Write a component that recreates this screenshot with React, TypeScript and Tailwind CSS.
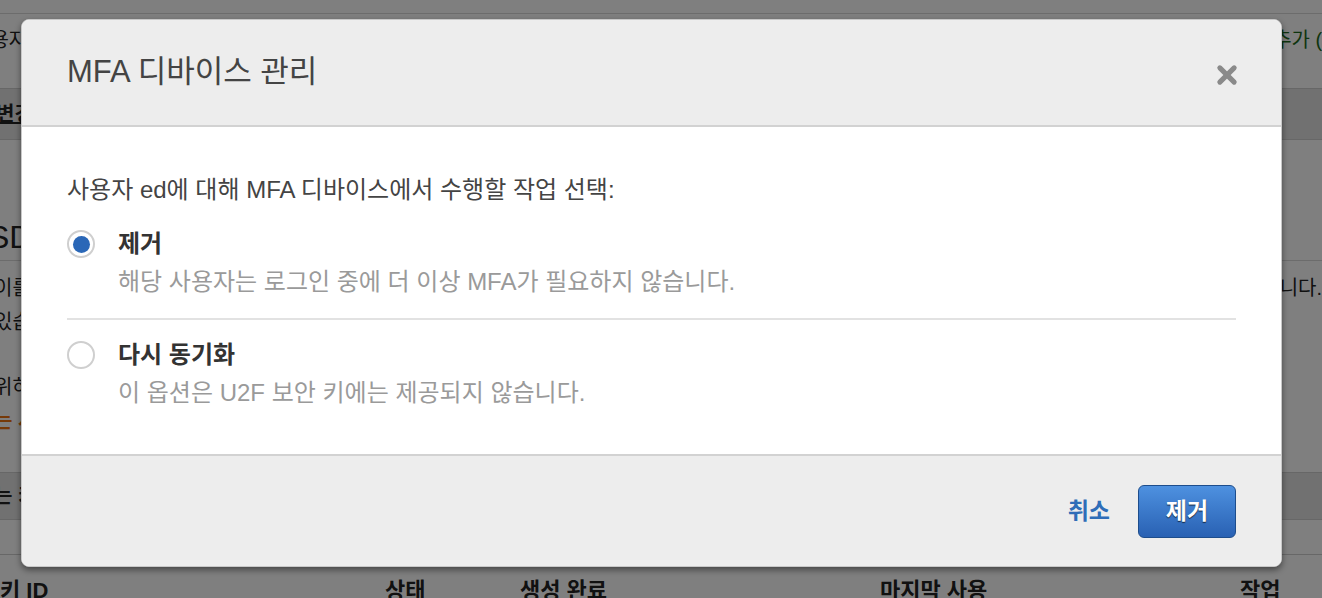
import { useState } from 'react'

const font = "font-['Liberation_Sans','Noto_Sans_CJK_KR',sans-serif]"

function Radio({ checked }: { checked: boolean }) {
  return (
    <span className="flex h-[28px] w-[28px] shrink-0 items-center justify-center rounded-full border-2 border-[#cfcfcf] bg-white">
      {checked && <span className="h-[17px] w-[17px] rounded-full bg-[#2a67b7]" />}
    </span>
  )
}

// dimmed AWS page behind the dialog
function Page() {
  return (
    <div className="min-h-[598px] overflow-hidden bg-white text-[#222]">
      <div className="h-[14px] border-b border-[#d8d8d8]" />
      <div className="flex h-[74px] items-start pt-[14px] text-[20px] leading-[24px]">
        <span className="-ml-[28px]">사용자 ARN</span>
        <span className="ml-auto -mr-[18px] text-[#1d6b1d]">추가 (0)</span>
      </div>
      <div className="flex h-[52px] items-center border-y border-[#cfcfcf] bg-[#e2e2e2]">
        <span className="-ml-[4px] text-[20px] font-bold underline">변경</span>
      </div>
      <div className="h-[74px]" />
      <div className="flex h-[46px] items-center text-[32px]">
        <span className="-ml-[12px]">SD</span>
      </div>
      <div className="border-t border-[#d8d8d8] pt-[10px] text-[20px] leading-[34px]">
        <div className="flex">
          <span className="-ml-[6px]">이를</span>
          <span className="ml-auto">니다.</span>
        </div>
        <div className="-ml-[6px]">있습</div>
        <div className="h-[31px]" />
        <div className="-ml-[6px]">위하</div>
        <div className="-ml-[6px] font-bold text-[#ec7211]">는 사</div>
      </div>
      <div className="mt-[34px] flex h-[48px] items-center border-y border-[#cfcfcf] bg-[#e2e2e2] text-[20px] font-bold">
        <span className="-ml-[6px]">는 키</span>
      </div>
      <div className="h-[35px] border-b border-[#cfcfcf]" />
      <div className="flex h-[70px] items-center text-[22px] font-bold">
        <span className="w-[385px]">키 ID</span>
        <span className="w-[135px]">상태</span>
        <span className="w-[360px]">생성 완료</span>
        <span className="w-[360px]">마지막 사용</span>
        <span>작업</span>
      </div>
    </div>
  )
}

export default function App() {
  const [choice, setChoice] = useState<'remove' | 'resync'>('remove')

  return (
    <div className={`relative h-[598px] w-[1322px] overflow-hidden ${font}`}>
      <Page />

      {/* Overlay */}
      <div className="absolute inset-0 bg-black/50">
        <div className="ml-[21px] mt-[19px] w-[1261px] overflow-hidden rounded-[8px] border border-[#c8c8c8] bg-white shadow-[0_3px_6px_rgba(0,0,0,0.45)]">
          {/* Header */}
          <div className="flex h-[107px] items-center justify-between border-b-2 border-[#d2d2d2] bg-[#ededed] pl-[45px] pr-[42px]">
            <h2 className="text-[31px] text-[#444]">MFA 디바이스 관리</h2>
            <button className="mt-[4px] flex h-[24px] w-[24px] items-center justify-center">
              <svg viewBox="0 0 20 20" className="h-[22px] w-[22px]">
                <path d="M3.5 3.5 L16.5 16.5 M16.5 3.5 L3.5 16.5" stroke="#8a8a8a" strokeWidth="4.6" strokeLinecap="round" />
              </svg>
            </button>
          </div>

          {/* Body */}
          <div className="px-[45px] pb-[46px] pt-[48px]">
            <p className="text-[24px] leading-[30px] text-[#444]">사용자 ed에 대해 MFA 디바이스에서 수행할 작업 선택:</p>

            <label className="mt-[24px] flex cursor-pointer gap-[23px]" onClick={() => setChoice('remove')}>
              <span className="flex h-[30px] items-center">
                <Radio checked={choice === 'remove'} />
              </span>
              <span>
                <span className="block text-[24px] font-bold leading-[30px] text-[#333]">제거</span>
                <span className="mt-[8px] block text-[24px] leading-[30px] text-[#9a9a9a]">해당 사용자는 로그인 중에 더 이상 MFA가 필요하지 않습니다.</span>
              </span>
            </label>

            <div className="mt-[21px] border-t-2 border-[#e2e2e2]" />

            <label className="mt-[20px] flex cursor-pointer gap-[23px]" onClick={() => setChoice('resync')}>
              <span className="flex h-[30px] items-center">
                <Radio checked={choice === 'resync'} />
              </span>
              <span>
                <span className="block text-[24px] font-bold leading-[30px] text-[#333]">다시 동기화</span>
                <span className="mt-[8px] block text-[24px] leading-[30px] text-[#9a9a9a]">이 옵션은 U2F 보안 키에는 제공되지 않습니다.</span>
              </span>
            </label>
          </div>

          {/* Footer */}
          <div className="flex h-[112px] items-center justify-end gap-[28px] border-t-2 border-[#d2d2d2] bg-[#ededed] pr-[45px]">
            <button className="text-[23px] font-bold text-[#2f6db8]">취소</button>
            <button className="h-[53px] w-[98px] rounded-[6px] border border-[#1d4d8c] bg-gradient-to-b from-[#4e91e0] to-[#2961b3] text-[23px] font-bold text-white [text-shadow:0_1px_1px_rgba(0,0,0,0.7)]">
              제거
            </button>
          </div>
        </div>
      </div>
    </div>
  )
}
